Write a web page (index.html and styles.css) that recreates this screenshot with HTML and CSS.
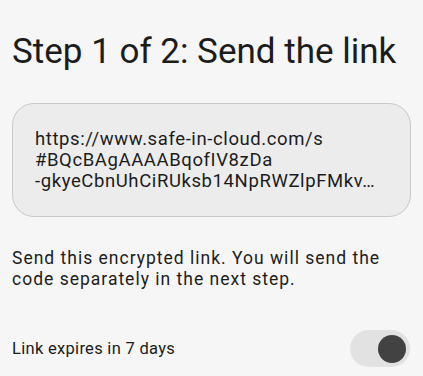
FILE: index.html
```html
<!DOCTYPE html>
<html>
<head>
<meta charset="utf-8">
<link rel="stylesheet" href="styles.css">
</head>
<body>
<main class="screen">
  <h1 class="title">Step 1 of 2: Send the link</h1>
  <div class="link-card">
    <p class="link-text">https://www.safe-in-cloud.com/s<br>#BQcBAgAAAABqofIV8zDa<br>-gkyeCbnUhCiRUksb14NpRWZlpFMkv…</p>
  </div>
  <p class="desc">Send this encrypted link. You will send the code separately in the next step.</p>
  <div class="expire-row">
    <span class="expire-label">Link expires in 7 days</span>
    <span class="switch"><span class="thumb"></span></span>
  </div>
</main>
</body>
</html>
```

FILE: styles.css
```css
html, body {
  margin: 0;
  padding: 0;
  background: #f6f6f6;
}
body {
  font-family: Roboto, "Noto Sans", sans-serif;
  color: #1c1c1c;
  width: 423px;
  height: 376px;
  overflow: hidden;
}
.screen {
  padding: 0 12px 0 12px;
  display: flex;
  flex-direction: column;
}
.title {
  margin: 30px 0 0 0;
  font-size: 35px;
  font-weight: 400;
  line-height: 44px;
  color: #1c1c1c;
}
.link-card {
  margin-top: 29px;
  height: 114px;
  box-sizing: border-box;
  background: #ececec;
  border: 1px solid #c8c8c8;
  border-radius: 22px;
  padding: 22px 22px;
  display: flex;
  align-items: center;
}
.link-text {
  margin: 0;
  font-size: 18.5px;
  line-height: 21px;
  letter-spacing: 0.6px;
  color: #1c1c1c;
  white-space: nowrap;
}
.desc {
  margin: 31px 0 0 0;
  font-size: 17.5px;
  line-height: 21px;
  letter-spacing: 1px;
  color: #1c1c1c;
}
.expire-row {
  margin-top: 40px;
  display: flex;
  align-items: center;
  justify-content: space-between;
}
.expire-label {
  font-size: 16.5px;
  letter-spacing: 0.3px;
  color: #1c1c1c;
}
.switch {
  width: 60px;
  height: 37px;
  border-radius: 19px;
  background: #e2e2e2;
  display: flex;
  align-items: center;
  justify-content: flex-end;
  padding-right: 4px;
  box-sizing: border-box;
  margin-right: 1px;
}
.thumb {
  width: 28px;
  height: 28px;
  border-radius: 50%;
  background: #424242;
}
```
